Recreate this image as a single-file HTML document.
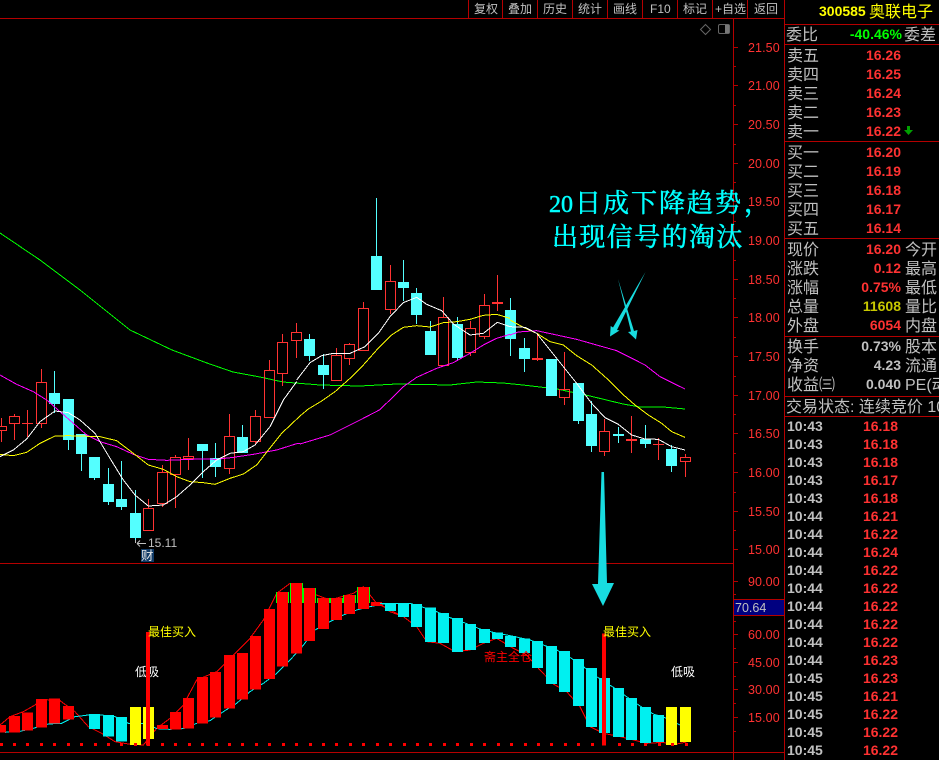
<!DOCTYPE html>
<html><head><meta charset="utf-8"><style>
html,body{margin:0;padding:0;background:#000;width:939px;height:760px;overflow:hidden}
svg{display:block;position:absolute;left:0;top:0}
text{font-family:"Liberation Sans","WenQuanYi Zen Hei","Noto Sans CJK SC",sans-serif}
.t{fill:#c0c0c0;font-size:12px}
.l{fill:#c0c0c0;font-size:16px}
.n{fill:#ff3232;font-size:14px;font-weight:bold;text-anchor:end}
.g{fill:#c0c0c0;font-size:14px;font-weight:bold;text-anchor:end}
.m{fill:#c0c0c0;font-size:14px;font-weight:bold}
.p{fill:#ff3232;font-size:14px;font-weight:bold;text-anchor:end}
.a{fill:#ff3232;font-size:12.5px;letter-spacing:.1px}
.an{fill:#00ffff;stroke:#00ffff;stroke-width:.5px;font-family:"Liberation Serif","Noto Serif CJK SC",serif;font-size:26px;font-weight:normal}
.pl{fill:none;vector-effect:non-scaling-stroke;stroke-width:1;shape-rendering:crispEdges}
</style></head><body>
<svg width="939" height="760" viewBox="0 0 939 760" xmlns="http://www.w3.org/2000/svg">
<!-- frame -->
<g stroke="#b40000" stroke-width="1" shape-rendering="crispEdges" fill="none">
<path d="M0 18.5H784.5M0 563.5H733.5M0 752.5H784.5M733.5 18V760M784.5 0V760"/>
<path d="M468.5 0V18M502.5 0V18M537.5 0V18M572.5 0V18M607.5 0V18M642.5 0V18M677.5 0V18M712.5 0V18M747.5 0V18"/>
<path d="M785 24.5H939M785 44.5H939M785 141.5H939M785 238.5H939M785 336.5H939M785 396.5H939M785 416.5H939"/>
<path d="M733 47.5h5M733 66.5h3M733 85.5h5M733 105.5h3M733 124.5h5M733 144.5h3M733 163.5h5M733 182.5h3M733 201.5h5M733 221.5h3M733 240.5h5M733 260.5h3M733 279.5h5M733 298.5h3M733 317.5h5M733 337.5h3M733 356.5h5M733 376.5h3M733 395.5h5M733 414.5h3M733 433.5h5M733 453.5h3M733 472.5h5M733 492.5h3M733 511.5h5M733 530.5h3M733 549.5h5"/>
<path d="M733 581.5h5M733 594.5h3M733 621.5h3M733 634.5h5M733 648.5h3M733 662.5h5M733 676.5h3M733 689.5h5M733 703.5h3M733 717.5h5M733 731.5h3"/>
</g>
<!-- toolbar -->
<g class="t">
<text class="t" x="474" y="13">复权</text><text class="t" x="508" y="13">叠加</text><text class="t" x="543" y="13">历史</text><text class="t" x="578" y="13">统计</text><text class="t" x="613" y="13">画线</text><text class="t" x="650" y="13">F10</text><text class="t" x="683" y="13">标记</text><text class="t" x="715" y="13">+自选</text><text class="t" x="754" y="13">返回</text>
</g>
<text x="819" y="16" style="fill:#ffff00;font-size:14px;font-weight:bold">300585</text>
<text x="869" y="17" style="fill:#ffff00;font-size:16px">奥联电子</text>
<!-- icons -->
<path d="M705.5 24.5l5 5-5 5-5-5z" fill="none" stroke="#666" stroke-width="1"/>
<rect x="718.5" y="24.5" width="11" height="9" rx="1.5" fill="none" stroke="#666"/><rect x="725" y="25" width="4" height="8" fill="#777"/>
<!-- axis labels -->
<g>
<text class="a" x="748" y="52">21.50</text><text class="a" x="748" y="90">21.00</text><text class="a" x="748" y="129">20.50</text><text class="a" x="748" y="168">20.00</text><text class="a" x="748" y="206">19.50</text><text class="a" x="748" y="245">19.00</text><text class="a" x="748" y="284">18.50</text><text class="a" x="748" y="322">18.00</text><text class="a" x="748" y="361">17.50</text><text class="a" x="748" y="400">17.00</text><text class="a" x="748" y="438">16.50</text><text class="a" x="748" y="477">16.00</text><text class="a" x="748" y="516">15.50</text><text class="a" x="748" y="554">15.00</text>
<text class="a" x="748" y="586">90.00</text><text class="a" x="748" y="639">60.00</text><text class="a" x="748" y="667">45.00</text><text class="a" x="748" y="694">30.00</text><text class="a" x="748" y="722">15.00</text>
</g>
<rect x="734" y="599" width="50" height="16" fill="#000080"/>
<path d="M734 599.5H784M734 615.5H784" stroke="#b40000" shape-rendering="crispEdges"/>
<text x="735" y="612" style="fill:#c0c0c0;font-size:12.5px">70.64</text>
<!-- MA green (behind) -->
<polyline class="pl" stroke="#00ff00" points="0,233 40,260 80,290 130,330 172,350 207,363 233,372 260,377 283,382 320,385 360,386 397,384 450,385 477,382 503,383 523,385 557,389 590,396 623,404 640,407 663,407 685,409"/>
<!-- candles -->
<g shape-rendering="crispEdges">
<path fill="none" stroke="#ff3232" d="M1.5 418V426M1.5 430V442M14.5 414V416M14.5 423V440M27.5 410V437M41.5 369V382M41.5 423V428M148.5 499V508M162.5 465V472M162.5 503V507M175.5 455V457M175.5 474V508M188.5 438V456M188.5 458V470M229.5 414V436M229.5 468V474M255.5 410V416M255.5 441V445M269.5 360V370M282.5 334V342M282.5 373V386M296.5 323V332M296.5 340V358M336.5 348V355M349.5 343V344M349.5 358V365M363.5 302V308M390.5 265V281M390.5 309V314M443.5 297V317M470.5 321V328M470.5 352V356M484.5 294V305M484.5 336V339M497.5 275V311M537.5 333V361M564.5 352V389M564.5 397V405M604.5 419V431M604.5 451V456M631.5 416V453M658.5 438V460M685.5 454V457M685.5 461V477"/>
<path fill="none" stroke="#ff3232" d="M-3.5 426.5H6.5V430.5H-3.5ZM9.5 416.5H19.5V423.5H9.5ZM36.5 382.5H46.5V423.5H36.5ZM143.5 508.5H153.5V530.5H143.5ZM157.5 472.5H167.5V503.5H157.5ZM170.5 457.5H180.5V474.5H170.5ZM183.5 456.5H193.5V458.5H183.5ZM224.5 436.5H234.5V468.5H224.5ZM250.5 416.5H260.5V441.5H250.5ZM264.5 370.5H274.5V417.5H264.5ZM277.5 342.5H287.5V373.5H277.5ZM291.5 332.5H301.5V340.5H291.5ZM331.5 355.5H341.5V380.5H331.5ZM344.5 344.5H354.5V358.5H344.5ZM358.5 308.5H368.5V350.5H358.5ZM385.5 281.5H395.5V309.5H385.5ZM438.5 317.5H448.5V365.5H438.5ZM465.5 328.5H475.5V352.5H465.5ZM479.5 305.5H489.5V336.5H479.5ZM559.5 389.5H569.5V397.5H559.5ZM599.5 431.5H609.5V451.5H599.5ZM680.5 457.5H690.5V461.5H680.5Z"/>
<path fill="#ff3232" d="M22 423h11v1H22zM492 302h11v2H492zM532 358h11v2H532zM626 439h11v2H626zM653 444h11v1H653z"/>
<path fill="none" stroke="#54ffff" d="M54.5 371V413M68.5 399V450M81.5 434V471M94.5 457V480M108.5 468V505M121.5 461V510M135.5 490V543M202.5 444V478M215.5 443V477M242.5 425V453M309.5 334V361M323.5 354V389M376.5 198V290M403.5 260V301M416.5 288V324M430.5 321V355M457.5 317V361M510.5 298V356M524.5 338V372M551.5 359V396M578.5 383V424M591.5 401V452M618.5 427V443M645.5 425V448M671.5 445V472"/>
<path fill="#54ffff" d="M49 393h11v11H49zM63 399h11v41H63zM76 434h11v20H76zM89 457h11v21H89zM103 484h11v18H103zM116 499h11v8H116zM130 513h11v25H130zM197 444h11v7H197zM210 458h11v9H210zM237 437h11v16H237zM304 339h11v17H304zM318 365h11v10H318zM371 256h11v34H371zM398 282h11v6H398zM411 293h11v22H411zM425 331h11v24H425zM452 324h11v34H452zM505 310h11v29H505zM519 348h11v11H519zM546 359h11v37H546zM573 383h11v38H573zM586 414h11v32H586zM613 434h11v2H613zM640 439h11v5H640zM666 449h11v17H666z"/>
</g>
<!-- MAs -->
<g fill="none">
<g transform="translate(0,350) scale(.33333)">
<polyline class="pl" stroke="#ff00ff" points="0,75 50,103 100,125 140,150 180,185 220,220 260,255 300,275 350,290 400,313 445,328 500,331 600,327 650,328 700,322 760,313 830,300 890,281 900,281"/>
<polyline class="pl" stroke="#ffff00" points="0,313 40,317 80,307 120,280 165,258 205,257 300,260 350,272 400,310 445,345 490,358 530,380 570,395 610,398 645,403 690,385 730,372 770,345 805,300 845,250 900,198"/>
<polyline class="pl" stroke="#ffffff" points="0,320 40,300 80,267 120,215 165,183 205,188 240,210 285,250 330,325 370,390 405,435 445,468 490,465 530,440 570,405 610,365 650,330 690,310 730,305 765,285 810,230 850,150 890,95"/>
</g>
<g transform="translate(250,190) scale(.33333)">
<polyline class="pl" stroke="#ff00ff" points="150,762 240,735 330,690 388,660 425,625 460,590 500,562 560,535 610,518 660,490 700,465 740,445 780,433"/>
<polyline class="pl" stroke="#ffff00" points="150,678 175,657 215,633 255,605 300,565 340,525 380,480 425,435 460,412 500,407 540,411 580,398 620,395 660,388 700,376 740,373 780,385"/>
<polyline class="pl" stroke="#ffffff" points="140,570 180,518 215,497 250,490 300,490 345,470 385,430 420,380 460,338 500,322 530,343 575,362 610,402 660,435 700,430 742,397 780,410"/>
</g>
<g transform="translate(490,270) scale(.33333)">
<polyline class="pl" stroke="#ff00ff" points="60,195 85,186 140,182 200,195 260,208 320,225 380,242 420,262 465,285 510,320 550,340 585,357"/>
<polyline class="pl" stroke="#ffff00" points="60,150 100,172 140,190 180,215 220,225 260,257 305,285 350,325 395,370 435,405 475,435 515,460 545,485 585,502"/>
<polyline class="pl" stroke="#ffffff" points="60,170 105,172 140,190 200,265 260,340 305,400 345,443 385,463 425,495 465,507 505,508 545,530 585,540"/>
</g>
</g>
<!-- low label -->
<path d="M146 543.5H137M137 543.5l3-3M137 543.5l3 3M135.5 540v3" stroke="#c0c0c0" fill="none"/>
<text x="148" y="547" style="fill:#c0c0c0;font-size:12px">15.11</text>
<rect x="141" y="549" width="13" height="13" fill="#103a66"/>
<text x="141" y="560" style="fill:#e8e8e8;font-size:12.5px">财</text>
<!-- annotation arrows -->
<g fill="#18dce0" stroke="none">
<path d="M645.5 272L617 330 619.500 330.500 610 336.500 610.700 326 613 327.500Z"/>
<path d="M618 279L634 331 637.500 330 636 339.500 628 332 631 331.500Z"/>
<path d="M601.500 472L604 472 607 583 614 583 603 606 592 584 598 584Z"/>
</g>
<text class="an" x="549" y="212"><tspan style="font-size:24px">20</tspan><tspan x="575 603 631 659 687 715 744">日成下降趋势，</tspan></text>
<text class="an" x="552" y="246" letter-spacing="1.4">出现信号的淘汰</text>
<!-- lower panel left -->
<g transform="translate(0,570) scale(.33333)">
<polyline class="pl" fill="none" stroke="#ff0000" points="0,465 30,440 70,425 105,405 125,388 180,392 225,425 265,470 305,490 345,515 385,522 430,525 470,475 510,445 550,405 590,330 650,305 700,255 750,205 790,150 830,70 870,40 950,75 990,90 1060,70 1090,50 1130,100 1200,135"/>
<polyline class="pl" fill="none" stroke="#00f0f0" points="15,487 60,484 100,475 145,462 185,460 225,440 265,435 305,435 345,440 385,460 440,460 470,476 510,478 550,476 590,460 630,452 670,425 710,400 750,365 790,340 830,310 870,270 905,232 945,180 990,155 1030,135 1070,120 1110,110 1150,102 1200,100"/>
<g shape-rendering="crispEdges">
<g fill="#00ff00"><rect x="828" y="66" width="39" height="33"/><rect x="870" y="39" width="39" height="60"/><rect x="909" y="54" width="39" height="45"/><rect x="951" y="84" width="39" height="15"/><rect x="990" y="84" width="39" height="15"/><rect x="1029" y="75" width="39" height="24"/><rect x="1071" y="51" width="39" height="48"/></g>
<g fill="#ff0000"><rect x="-12" y="465" width="30" height="23"/><rect x="27" y="438" width="33" height="50"/><rect x="66" y="427" width="33" height="55"/><rect x="108" y="387" width="33" height="86"/><rect x="147" y="385" width="33" height="76"/><rect x="189" y="408" width="33" height="41"/><rect x="471" y="465" width="33" height="12"/><rect x="510" y="426" width="33" height="53"/><rect x="549" y="384" width="33" height="92"/><rect x="591" y="321" width="33" height="140"/><rect x="630" y="306" width="33" height="137"/><rect x="672" y="255" width="33" height="161"/><rect x="711" y="249" width="33" height="140"/><rect x="750" y="198" width="33" height="161"/><rect x="792" y="117" width="33" height="210"/><rect x="831" y="66" width="33" height="224"/><rect x="873" y="39" width="33" height="212"/><rect x="912" y="54" width="33" height="159"/><rect x="954" y="84" width="33" height="93"/><rect x="993" y="84" width="33" height="66"/><rect x="1032" y="75" width="33" height="57"/><rect x="1074" y="51" width="33" height="66"/><rect x="1113" y="96" width="33" height="12"/></g>
<g fill="#00f0f0"><rect x="267" y="432" width="33" height="45"/><rect x="309" y="435" width="33" height="65"/><rect x="348" y="441" width="33" height="74"/></g>
<g fill="#ffff00"><rect x="390" y="411" width="33" height="114"/><rect x="429" y="411" width="33" height="96"/></g>
<rect x="438" y="186" width="12" height="341" fill="#ff0000"/>
</g>
</g>
<!-- lower panel right -->
<g transform="translate(380,570) scale(.33333)">
<polyline class="pl" fill="none" stroke="#ff0000" points="0,100 30,125 70,140 110,170 140,215 180,220 225,245 270,240 310,220 350,205 400,235 440,255 480,300 520,342 560,365 600,410 630,470 670,490 720,500 760,510 800,520 850,517 875,525 920,516"/>
<polyline class="pl" fill="none" stroke="#00f0f0" points="0,100 90,100 130,112 170,125 210,143 250,157 300,177 340,187 390,197 450,210 490,225 530,240 570,262 610,290 650,320 700,352 740,380 780,408 820,432 860,445 900,465"/>
<g shape-rendering="crispEdges" fill="#00f0f0">
<rect x="15" y="99" width="33" height="24"/><rect x="54" y="99" width="33" height="42"/><rect x="93" y="102" width="33" height="69"/><rect x="135" y="113" width="33" height="103"/><rect x="174" y="129" width="33" height="90"/><rect x="216" y="144" width="33" height="102"/><rect x="255" y="162" width="33" height="78"/><rect x="297" y="177" width="33" height="42"/><rect x="336" y="187" width="33" height="20"/><rect x="375" y="198" width="33" height="33"/><rect x="417" y="206" width="33" height="43"/><rect x="456" y="213" width="33" height="81"/><rect x="498" y="228" width="33" height="114"/><rect x="537" y="243" width="33" height="123"/><rect x="579" y="267" width="33" height="141"/><rect x="618" y="294" width="33" height="177"/><rect x="657" y="324" width="33" height="165"/><rect x="699" y="354" width="33" height="147"/><rect x="738" y="384" width="33" height="126"/><rect x="780" y="411" width="33" height="108"/><rect x="819" y="435" width="33" height="81"/>
<rect x="858" y="411" width="33" height="114" fill="#ffff00"/><rect x="900" y="411" width="33" height="105" fill="#ffff00"/>
<rect x="666" y="190" width="12" height="337" fill="#ff0000"/>
</g>
</g>
<!-- dots -->
<path fill="#ff0000" shape-rendering="crispEdges" d="M0 743h3v3H0zM13 743h3v3h-3zM26 743h3v3h-3zM40 743h3v3h-3zM53 743h3v3h-3zM67 743h3v3h-3zM80 743h3v3h-3zM94 743h3v3h-3zM107 743h3v3h-3zM120 743h3v3h-3zM134 743h3v3h-3zM147 743h3v3h-3zM161 743h3v3h-3zM174 743h3v3h-3zM188 743h3v3h-3zM201 743h3v3h-3zM215 743h3v3h-3zM228 743h3v3h-3zM241 743h3v3h-3zM255 743h3v3h-3zM268 743h3v3h-3zM282 743h3v3h-3zM295 743h3v3h-3zM309 743h3v3h-3zM322 743h3v3h-3zM335 743h3v3h-3zM349 743h3v3h-3zM362 743h3v3h-3zM376 743h3v3h-3zM389 743h3v3h-3zM403 743h3v3h-3zM416 743h3v3h-3zM429 743h3v3h-3zM443 743h3v3h-3zM456 743h3v3h-3zM470 743h3v3h-3zM483 743h3v3h-3zM497 743h3v3h-3zM510 743h3v3h-3zM524 743h3v3h-3zM537 743h3v3h-3zM550 743h3v3h-3zM564 743h3v3h-3zM577 743h3v3h-3zM591 743h3v3h-3zM618 743h3v3h-3zM631 743h3v3h-3zM644 743h3v3h-3zM658 743h3v3h-3zM671 743h3v3h-3zM685 743h3v3h-3z"/>
<!-- lower labels -->
<text x="148" y="636" style="fill:#ffff00;font-size:12px">最佳买入</text>
<text x="603" y="636" style="fill:#ffff00;font-size:12px">最佳买入</text>
<text x="135" y="676" style="fill:#ffffff;font-size:12px">低吸</text>
<rect x="146" y="660" width="4" height="20" fill="#ff0000"/>
<text x="671" y="676" style="fill:#ffffff;font-size:12px">低吸</text>
<text x="484" y="661" style="fill:#ff0000;font-size:12px">斋主全仓</text>
<!-- right panel: depth -->
<text class="l" x="786" y="40">委比</text>
<text x="902" y="39" text-anchor="end" style="fill:#00ff00;font-size:14px;font-weight:bold">-40.46%</text>
<text class="l" x="904" y="40">委差</text>
<text class="l" x="787" y="61">卖五</text><text class="n" x="901" y="60">16.26</text>
<text class="l" x="787" y="80">卖四</text><text class="n" x="901" y="79">16.25</text>
<text class="l" x="787" y="99">卖三</text><text class="n" x="901" y="98">16.24</text>
<text class="l" x="787" y="118">卖二</text><text class="n" x="901" y="117">16.23</text>
<text class="l" x="787" y="137">卖一</text><text class="n" x="901" y="136">16.22</text>
<path d="M907 126h3v4h3l-4.500 5-4.500-5h3z" fill="#00a000"/>
<text class="l" x="787" y="158">买一</text><text class="n" x="901" y="157">16.20</text>
<text class="l" x="787" y="177">买二</text><text class="n" x="901" y="176">16.19</text>
<text class="l" x="787" y="196">买三</text><text class="n" x="901" y="195">16.18</text>
<text class="l" x="787" y="215">买四</text><text class="n" x="901" y="214">16.17</text>
<text class="l" x="787" y="234">买五</text><text class="n" x="901" y="233">16.14</text>
<text class="l" x="787" y="255">现价</text><text class="n" x="901" y="254">16.20</text><text class="l" x="905" y="255">今开</text>
<text class="l" x="787" y="274">涨跌</text><text class="n" x="901" y="273">0.12</text><text class="l" x="905" y="274">最高</text>
<text class="l" x="787" y="293">涨幅</text><text class="n" x="901" y="292">0.75%</text><text class="l" x="905" y="293">最低</text>
<text class="l" x="787" y="312">总量</text><text class="n" x="901" y="311" style="fill:#c8c800">11608</text><text class="l" x="905" y="312">量比</text>
<text class="l" x="787" y="331">外盘</text><text class="n" x="901" y="330">6054</text><text class="l" x="905" y="331">内盘</text>
<text class="l" x="787" y="352">换手</text><text class="g" x="901" y="351">0.73%</text><text class="l" x="905" y="352">股本</text>
<text class="l" x="787" y="371">净资</text><text class="g" x="901" y="370">4.23</text><text class="l" x="905" y="371">流通</text>
<text class="l" x="787" y="390">收益㈢</text><text class="g" x="901" y="389">0.040</text><text class="l" x="905" y="390">PE(动</text>
<text class="l" x="786" y="412">交易状态: 连续竞价 10</text>
<!-- ticks -->
<g>
<text class="m" x="787" y="431">10:43</text><text class="p" x="898" y="431">16.18</text>
<text class="m" x="787" y="449">10:43</text><text class="p" x="898" y="449">16.18</text>
<text class="m" x="787" y="467">10:43</text><text class="p" x="898" y="467">16.18</text>
<text class="m" x="787" y="485">10:43</text><text class="p" x="898" y="485">16.17</text>
<text class="m" x="787" y="503">10:43</text><text class="p" x="898" y="503">16.18</text>
<text class="m" x="787" y="521">10:44</text><text class="p" x="898" y="521">16.21</text>
<text class="m" x="787" y="539">10:44</text><text class="p" x="898" y="539">16.22</text>
<text class="m" x="787" y="557">10:44</text><text class="p" x="898" y="557">16.24</text>
<text class="m" x="787" y="575">10:44</text><text class="p" x="898" y="575">16.22</text>
<text class="m" x="787" y="593">10:44</text><text class="p" x="898" y="593">16.22</text>
<text class="m" x="787" y="611">10:44</text><text class="p" x="898" y="611">16.22</text>
<text class="m" x="787" y="629">10:44</text><text class="p" x="898" y="629">16.22</text>
<text class="m" x="787" y="647">10:44</text><text class="p" x="898" y="647">16.22</text>
<text class="m" x="787" y="665">10:44</text><text class="p" x="898" y="665">16.23</text>
<text class="m" x="787" y="683">10:45</text><text class="p" x="898" y="683">16.23</text>
<text class="m" x="787" y="701">10:45</text><text class="p" x="898" y="701">16.21</text>
<text class="m" x="787" y="719">10:45</text><text class="p" x="898" y="719">16.22</text>
<text class="m" x="787" y="737">10:45</text><text class="p" x="898" y="737">16.22</text>
<text class="m" x="787" y="755">10:45</text><text class="p" x="898" y="755">16.22</text>
</g>
</svg>
</body></html>
